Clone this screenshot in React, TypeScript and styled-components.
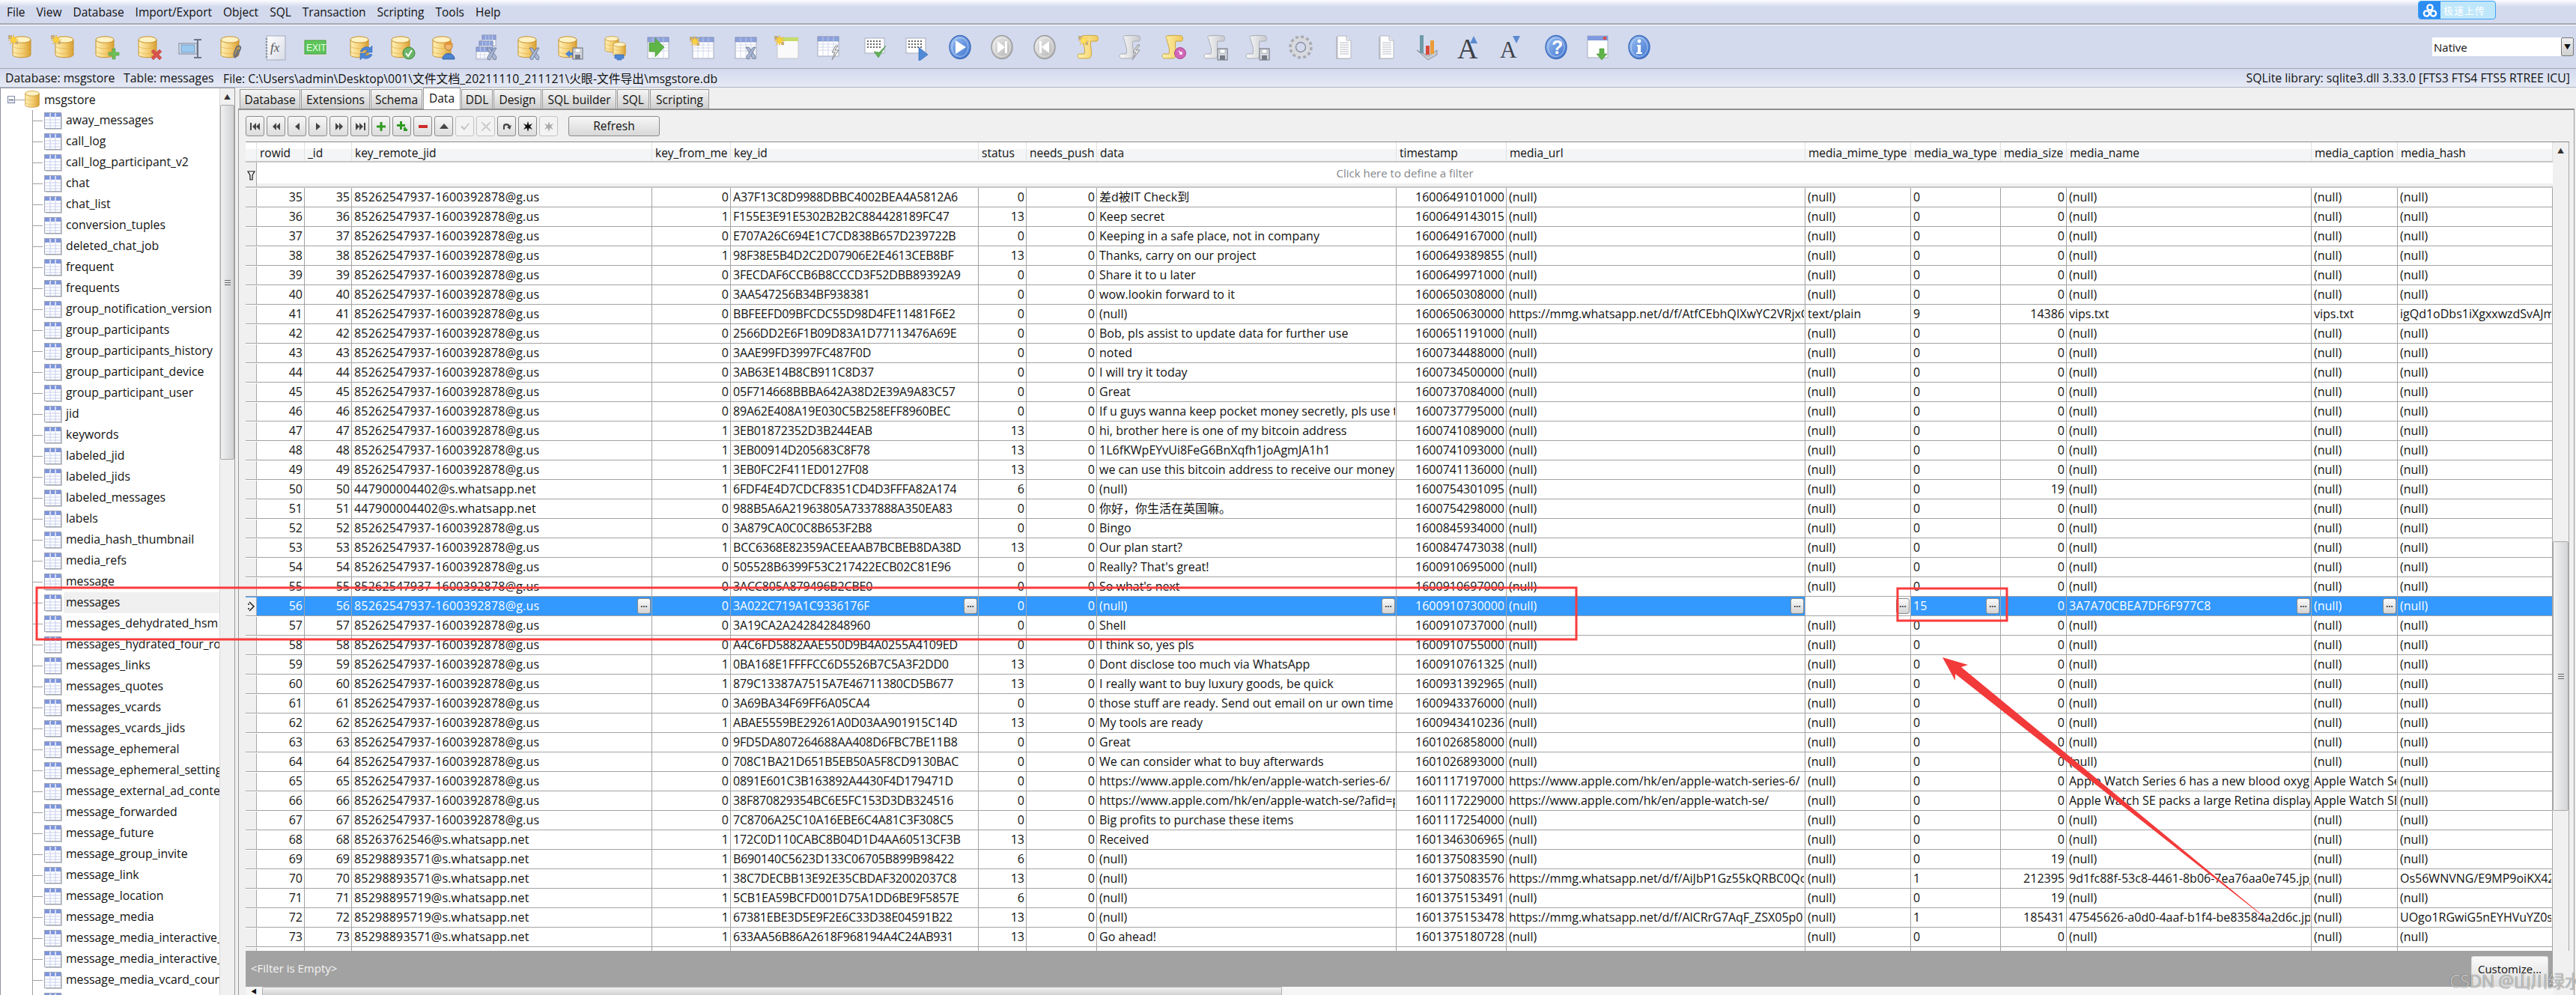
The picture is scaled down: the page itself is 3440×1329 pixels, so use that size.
import React from "react";
import styled, { createGlobalStyle } from "styled-components";

const Global = createGlobalStyle`
  html, body { margin: 0; padding: 0; background: #f0f0f0; }
  body { font-family: "Open Sans", "Noto Sans CJK SC", sans-serif; color: #111; overflow: hidden; }
  * { box-sizing: border-box; }
`;

const Page = styled.div`
  position: relative; width: 3440px; height: 1329px; overflow: hidden;
  display: flex; flex-direction: column; background: #f0f0f0;
`;
const MenuBar = styled.div`
  height: 33px; flex: none; display: flex; gap: 15px; padding: 5px 0 0 9px; font-size: 15.5px; line-height: 22px;
  background: linear-gradient(#fdfdfe 0, #d3daee 9px, #d3daee 100%);
  border-bottom: 1px solid #a4a8b0; box-shadow: inset 0 -1px 0 #a4a8b0;
`;
const MenuItem = styled.span``;
const Toolbar = styled.div`
  height: 59px; flex: none; display: flex; align-items: center; position: relative;
  background: #d3daee; border-top: 1px solid #fff; border-bottom: 1px solid #a4a8b0;
`;
const ToolIcon = styled.svg<{ $ml: number }>`
  width: 38px; height: 36px; flex: none; margin-left: ${p => p.$ml}px;
`;
const Native = styled.div`
  position: absolute; left: 3248px; top: 16px; width: 189px; height: 25px; background: #fff;
  display: flex; align-items: center; font-size: 15px; padding-left: 2px;
`;
const NativeBtn = styled.div`
  position: absolute; right: 0; top: 0; width: 17px; height: 25px; background: linear-gradient(#f0f0f0, #cfcfcf);
  border: 1px solid #777; border-radius: 2px; display: flex; align-items: center; justify-content: center; font-size: 9px;
`;
const StatusBar = styled.div`
  height: 25px; flex: none; display: flex; align-items: center; font-size: 15.8px; padding: 0 8px 0 7px;
  background: linear-gradient(#d3daee, #e6eaf5); border-bottom: 1px solid #aeb4c2;
`;
const StatusItem = styled.span<{ $w?: number }>`
  width: ${p => (p.$w ? `${p.$w}px` : "auto")}; white-space: nowrap;
`;
const StatusRight = styled.span`margin-left: auto; white-space: nowrap;`;
const Main = styled.div`flex: 1; min-height: 0; display: flex;`;

const TreePanel = styled.div`
  width: 314px; flex: none; display: flex; background: #fff; border-left: 1px solid #8f939c;
  border-right: 1px solid #9a9a9a; border-top: 1px solid #9a9ea8; overflow: hidden;
`;
const TreeBody = styled.div`flex: 1; min-width: 0; overflow: hidden; padding-top: 1px;`;
const RootRow = styled.div`display: flex; align-items: center; height: 28px; font-size: 15.8px; padding-left: 9px;`;
const Expander = styled.span`
  width: 10px; height: 10px; border: 1px solid #7d8aa6; flex: none; display: flex; align-items: center; justify-content: center;
  background: linear-gradient(#fff, #dde2ee);
  &::before { content: ""; width: 6px; height: 1px; background: #445; }
`;
const RootStub = styled.span`width: 13px; height: 1px; background: #a0a0a0; flex: none;`;
const RootLabel = styled.span`margin-left: 6px;`;
const TreeList = styled.div`margin-left: 42px; border-left: 1px solid #a0a0a0; font-size: 15.8px;`;
const TreeItem = styled.div`height: 28px; display: flex; align-items: center;`;
const TreeStub = styled.span`width: 13px; height: 1px; background: #a0a0a0; flex: none;`;
const TableGlyph = styled.svg`width: 24px; height: 23px; flex: none; margin-left: 2px;`;
const TreeLabel = styled.span<{ $sel?: boolean }>`
  flex: 1; min-width: 0; height: 28px; line-height: 26px; margin-left: 2px; padding-left: 3px; white-space: nowrap; overflow: hidden;
  background: ${p => (p.$sel ? "#f0f0f0" : "transparent")};
`;
const TreeScroll = styled.div`
  width: 20px; flex: none; background: #f0f0f0; border-left: 1px solid #d8d8d8; position: relative; display: flex; flex-direction: column;
`;
const ScrollArrow = styled.div`height: 22px; flex: none; display: flex; align-items: center; justify-content: center; font-size: 9px; color: #333;`;
const TreeThumb = styled.div`
  height: 474px; flex: none; background: linear-gradient(90deg, #f1f1f1, #cfd1d3); border: 1px solid #a8a8a8; border-radius: 2px;
  display: flex; align-items: center; justify-content: center;
`;
const Grip = styled.span`
  width: 8px; height: 7px; border-top: 1px solid #666; border-bottom: 1px solid #666; position: relative;
  &::after { content: ""; position: absolute; left: 0; right: 0; top: 2px; height: 1px; background: #666; }
`;

const Right = styled.div`flex: 1; min-width: 0; display: flex; flex-direction: column; padding-left: 4px; padding-right: 2px;`;
const TabStrip = styled.div`height: 28px; flex: none; display: flex; align-items: flex-end; padding-left: 2px; gap: 1px; font-size: 15.5px;`;
const Tab = styled.div<{ $w: number; $active?: boolean }>`
  width: ${p => p.$w}px; height: ${p => (p.$active ? 29 : 26)}px; text-align: center; white-space: nowrap;
  line-height: ${p => (p.$active ? 26 : 27)}px; border: 1px solid #9a9a9a; border-bottom: none;
  background: ${p => (p.$active ? "#fff" : "linear-gradient(#f2f2f2 10%, #cfcfcf)")};
  margin-bottom: ${p => (p.$active ? -1 : 0)}px; position: relative; z-index: ${p => (p.$active ? 2 : 0)};
`;
const TabPage = styled.div`
  flex: 1; min-height: 0; display: flex; flex-direction: column; background: #f0f0f0;
  border: 1px solid #9a9a9a; border-top: 2px solid #8e8e8e; border-bottom: none; padding: 8px 6px 0 9px;
`;
const NavRow = styled.div`height: 27px; flex: none; display: flex; gap: 3px; align-items: stretch;`;
const NavBtn = styled.div<{ $off?: boolean }>`
  width: 25px; display: flex; align-items: center; justify-content: center; border-radius: 3px;
  border: 1px solid ${p => (p.$off ? "#c4c4c4" : "#8c8c8c")};
  background: ${p => (p.$off ? "#f3f3f3" : "linear-gradient(#f6f6f6, #dcdcdc)")};
`;
const NavSvg = styled.svg`width: 18px; height: 18px;`;
const RefreshBtn = styled.div`
  width: 122px; margin-left: 11px; border: 1px solid #8c8c8c; border-radius: 3px; text-align: center; line-height: 25px; font-size: 15.5px;
  background: linear-gradient(#f6f6f6, #d8d8d8);
`;
const GridFrame = styled.div`
  flex: 1; min-height: 0; margin-top: 7px; display: flex; flex-direction: column; border-top: 1px solid #8b8b8b; border-left: 1px solid #a8a8a8;
`;
const GridMain = styled.div`flex: 1; min-height: 0; display: flex;`;
const Table = styled.div`width: 3081px; flex: none; display: flex; flex-direction: column; margin-left: -1px; background: #fff;`;
const COLS = "15px 64px 63px 401px 105px 331px 64px 94px 400px 147px 399px 141px 120px 88px 327px 115px 207px";
const HeaderRow = styled.div`
  height: 27px; flex: none; display: grid; grid-template-columns: ${COLS};
  font-size: 15.5px; border-bottom: 2px solid #c6c6c6;
  background: linear-gradient(#fff 35%, #f4f5f7 35%);
`;
const HeaderCell = styled.div`
  padding: 3px 0 0 4px; line-height: 22px; border-right: 1px solid #e2e2e2; white-space: nowrap; overflow: hidden;
`;
const FilterRow = styled.div`
  height: 34px; flex: none; display: flex; border-bottom: 2px solid #c6c6c6;
  background: linear-gradient(#fff 86%, #f0f0f0 86%);
`;
const FilterMark = styled.div`
  width: 15px; flex: none; background: #f0f0f0; border-right: 1px solid #a8a8a8; display: flex; align-items: center; justify-content: center;
  padding-top: 4px;
`;
const FilterHint = styled.div`flex: 1; text-align: center; line-height: 28px; font-size: 15px; color: #83878c;`;
const Rows = styled.div`flex: 1; min-height: 0; overflow: hidden;`;
const Row = styled.div<{ $sel?: boolean }>`
  height: 26px; display: grid; grid-template-columns: ${COLS}; font-size: 16px; line-height: 25px;
  border-bottom: 1px solid #a3a3a3; color: ${p => (p.$sel ? "#fff" : "#111")}; background: ${p => (p.$sel ? "#3399ff" : "#fff")};
`;
const Indicator = styled.div`
  background: #f0f0f0; border-right: 1px solid #a8a8a8; display: flex; align-items: center; justify-content: center; margin-top: 1px;
`;
const Cell = styled.div<{ $num?: boolean; $white?: boolean; $ls?: number }>`
  display: flex; min-width: 0; border-right: 1px solid #a3a3a3; padding: ${p => (p.$num ? "0 2px 0 0" : "0 1px 0 3px")}; align-items: center;
  justify-content: ${p => (p.$num ? "flex-end" : "flex-start")}; overflow: hidden; white-space: nowrap;
  background: ${p => (p.$white ? "#fff" : "transparent")}; letter-spacing: ${p => p.$ls ?? 0}px;
`;
const CellText = styled.span`flex: 0 1 auto; min-width: 0; overflow: hidden;`;
const MoreBtn = styled.span`
  width: 18px; height: 21px; flex: none; margin-left: auto; border: 1px solid #8a8a8a; border-radius: 3px; color: #111;
  background: linear-gradient(#fbfbfb, #d4d4d4); text-align: center; font-size: 11px; line-height: 13px; font-weight: 700; letter-spacing: 0;
`;
const FilterBar = styled.div`
  height: 48px; flex: none; background: #a2a2a2; color: #f4f4f4; font-size: 15px; display: flex; align-items: center;
  justify-content: space-between; padding: 0 6px 0 7px;
`;
const FilterText = styled.span`margin-top: -2px;`;
const Customize = styled.div`
  width: 103px; height: 41px; margin-top: 7px; color: #111; text-align: center; line-height: 32px; font-size: 15px;
  border: 1px solid #d8d8d8; border-bottom: none; border-radius: 3px 3px 0 0; background: linear-gradient(#fafafa, #dcdcdc);
`;
const VScroll = styled.div`width: 22px; flex: none; height: 1080px; background: #f0f0f0; display: flex; flex-direction: column; border-right: 1px solid #a8a8a8;`;
const VSpacer = styled.div`height: 511px; flex: none;`;
const VThumb = styled.div`
  height: 360px; flex: none; background: linear-gradient(90deg, #f2f2f2, #d3d5d7); border: 1px solid #a8a8a8; border-radius: 2px;
  display: flex; align-items: center; justify-content: center;
`;
const HScroll = styled.div`height: 11px; flex: none; width: 3081px; margin-left: -1px; background: #f6f6f6; display: flex; align-items: center;`;
const HArrow = styled.div`width: 22px; flex: none; font-size: 8px; text-align: center; line-height: 11px;`;
const HThumb = styled.div`
  width: 1362px; height: 11px; flex: none; background: linear-gradient(#f0f0f0, #d2d2d2); border: 1px solid #b0b0b0; border-bottom: none; border-radius: 2px 2px 0 0;
`;
const Cloud = styled.div`
  position: absolute; left: 3229px; top: 1px; width: 104px; height: 25px; display: flex; border: 1px solid #3ea0f5; border-radius: 4px;
  overflow: hidden; background: #bfe7fb; color: #fff; font-size: 14px; line-height: 23px;
`;
const CloudLogo = styled.div`width: 29px; flex: none; background: #2b8df2; display: flex; align-items: center; justify-content: center;`;
const CloudText = styled.span`padding-left: 4px; font-family: "Noto Sans CJK SC", sans-serif; letter-spacing: 1px; font-size: 13px;`;
const Annotation = styled.svg`position: absolute; left: 0; top: 0; pointer-events: none;`;
const Watermark = styled.div`
  position: absolute; left: 3271px; top: 1296px; font-size: 23px; line-height: 28px; white-space: nowrap; color: rgba(235, 235, 235, 0.75);
  letter-spacing: -0.3px; text-shadow: 0 0 1px rgba(40, 40, 40, 0.9);
`;
const DefsSvg = styled.svg`position: absolute; width: 0; height: 0;`;

/* ---------- icon pieces ---------- */
const Defs = () => (
  <DefsSvg>
    <defs>
      <linearGradient id="gold" x1="0" x2="1" y1="0" y2="0">
        <stop offset="0" stopColor="#fff0b8" /><stop offset=".55" stopColor="#f3cd72" /><stop offset="1" stopColor="#d99e32" />
      </linearGradient>
      <linearGradient id="paper" x1="0" x2="1" y1="0" y2="1">
        <stop offset="0" stopColor="#ffffff" /><stop offset="1" stopColor="#d8dce6" />
      </linearGradient>
      <linearGradient id="blue" x1="0" x2="1" y1="0" y2="1">
        <stop offset="0" stopColor="#9cc0f2" /><stop offset="1" stopColor="#3d73cf" />
      </linearGradient>
      <linearGradient id="grey" x1="0" x2="1" y1="0" y2="1">
        <stop offset="0" stopColor="#ededed" /><stop offset="1" stopColor="#b2b2b2" />
      </linearGradient>
      <linearGradient id="scroll" x1="0" x2="1" y1="0" y2="0">
        <stop offset="0" stopColor="#fff3b0" /><stop offset="1" stopColor="#f0c95c" />
      </linearGradient>
      <linearGradient id="gscroll" x1="0" x2="1" y1="0" y2="0">
        <stop offset="0" stopColor="#fbfbfb" /><stop offset="1" stopColor="#c6c8cc" />
      </linearGradient>
    </defs>
  </DefsSvg>
);

const Db = ({ x = 7, y = 3, s = 1 }: { x?: number; y?: number; s?: number }) => (
  <g transform={`translate(${x} ${y}) scale(${s})`}>
    <path d="M0 5v20c0 5 24 5 24 0V5z" fill="url(#gold)" stroke="#c4912a" />
    <path d="M0 13c0 5 24 5 24 0M0 20c0 5 24 5 24 0" fill="none" stroke="#e2b552" strokeWidth=".8" />
    <ellipse cx="12" cy="5" rx="12" ry="4.2" fill="#fff2c4" stroke="#c4912a" />
  </g>
);
const Star = ({ x = 0, y = 0, c = "#fbd23c" }: { x?: number; y?: number; c?: string }) => (
  <g transform={`translate(${x} ${y})`}>
    <rect x="0" y="1" width="5" height="5" fill="#b9a98c" /><rect x="9" y="9" width="4" height="4" fill="#b9a98c" />
    <path d="M7 0l1.2 4.6L13 2.5 9.6 6.4 14 7.5 9.6 8.6 12 13 8 9.8 7 14 6 9.8 2 13l2.4-4.4L0 7.5l4.4-1.1L1 2.5l4.8 2.1z" fill={c} stroke="#e8a32c" strokeWidth=".4" />
  </g>
);
const Plus = ({ x = 22, y = 20 }: { x?: number; y?: number }) => (
  <path transform={`translate(${x} ${y})`} d="M5 0h4v5h5v4H9v5H5V9H0V5h5z" fill="#6fbf56" stroke="#4d9a3c" strokeWidth=".6" />
);
const Cross = ({ x = 23, y = 21 }: { x?: number; y?: number }) => (
  <path transform={`translate(${x} ${y})`} d="M2 0l4 4 4-4 3 3-4 4 4 4-3 3-4-4-4 4-3-3 4-4-4-4z" fill="#d9504c" stroke="#b33c38" strokeWidth=".5" />
);
const Wrench = ({ x = 20, y = 17 }: { x?: number; y?: number }) => (
  <g transform={`translate(${x} ${y})`} fill="#a9b8d6" stroke="#66708c" strokeWidth=".8">
    <path d="M1 1l4 0 9 12-1 4-3-1z" /><path d="M14 1l-3 0-9 12 0 3 3 1z" />
  </g>
);
const Floppy = ({ x = 20, y = 18 }: { x?: number; y?: number }) => (
  <g transform={`translate(${x} ${y})`}>
    <rect width="13" height="15" fill="#d7d9de" stroke="#666c78" />
    <rect x="3" y="1" width="7" height="5" fill="#fff" stroke="#8a8f99" strokeWidth=".6" />
    <rect x="3" y="9" width="7" height="6" fill="#767b86" />
  </g>
);
const Sheet = ({ x = 6, y = 5, w = 24, h = 24 }: { x?: number; y?: number; w?: number; h?: number }) => (
  <g transform={`translate(${x} ${y})`}>
    <rect width={w} height={h} fill="#fff" stroke="#a5abbc" />
    <rect width={w} height="6" fill="#8ea3dc" stroke="#7486b8" strokeWidth=".6" />
    {[1, 2, 3].map(i => <path key={i} d={`M${(i * w) / 4} 0V${h}`} stroke="#c8cfe8" strokeWidth=".8" />)}
    {[10, 14, 18].map(i => <path key={i} d={`M0 ${i}H${w}`} stroke="#c8cfe8" strokeWidth=".8" />)}
  </g>
);
const Scroll = ({ fill = "url(#scroll)", stroke = "#c9a43a" }: { fill?: string; stroke?: string }) => (
  <g>
    <path d="M10 3c6-1 15-1 20 0 2 1 2 6 0 7l-8 0c-2 6 2 14 0 20-1 3-4 3-7 3H7c-3 0-4-5-1-6l7 0c2-7-2-14-3-20-1-2-2-3 0-4z" fill={fill} stroke={stroke} />
  </g>
);
const Circle = ({ fill }: { fill: string }) => (
  <>
    <ellipse cx="19" cy="18" rx="14" ry="15.5" fill={fill} stroke={fill === "url(#blue)" ? "#3e6bb8" : "#9a9a9a"} strokeWidth="1.4" />
    <ellipse cx="19" cy="18" rx="11" ry="12.5" fill="none" stroke="#fff" strokeOpacity=".5" />
  </>
);
const Doc = () => (
  <g>
    <path d="M11 3h12l6 6v24H11z" fill="#b9bcc4" transform="translate(-2 1)" />
    <path d="M11 3h12l6 6v24H11z" fill="#fff" stroke="#b5b8c0" />
    <path d="M23 3v6h6" fill="#e6e8ee" stroke="#b5b8c0" />
    {[12, 15, 18, 21, 24, 27].map(y => <path key={y} d={`M14 ${y}h12`} stroke="#b8bcc6" />)}
  </g>
);
const Keys = () => (
  <g>
    <rect x="7" y="6" width="26" height="20" fill="#fff" stroke="#a5abbc" />
    {[9, 13, 17].map(y => [10, 14, 18, 22, 26].map(x => <rect key={`${x}${y}`} x={x} y={y} width="2" height="2" fill="#666" />))}
  </g>
);
const T = styled.text``;

function glyph(k: string) {
  switch (k) {
    case "dbStar": return <><Db /><Star x={1} y={1} /></>;
    case "dbPlus": return <><Db x={5} /><Plus /></>;
    case "dbX": return <><Db x={5} /><Cross /></>;
    case "input": return <><rect x="4" y="13" width="24" height="14" fill="#dfe3ee" stroke="#7a8296" /><rect x="7" y="15" width="18" height="10" fill="#9bc9ee" stroke="#6e9cc4" /><path d="M24 8h10M29 8v24M24 32h10" stroke="#6d7484" strokeWidth="2" fill="none" /></>;
    case "dbClip": return <><Db x={4} /><path d="M24 32c-3-1-3-4-2-7l3-7c2-3 6-1 5 2l-4 9c-1 2-3 1-2-1l3-7" fill="none" stroke="#6b6f77" strokeWidth="2" /></>;
    case "fx": return <><rect x="9" y="3" width="25" height="32" fill="url(#paper)" stroke="#a5abbc" /><path d="M9 6v26" stroke="#8b92a2" strokeWidth="2.4" strokeDasharray="2 2" /><T x="14" y="24" fontFamily="Liberation Serif" fontStyle="italic" fontSize="17" fill="#555">fx</T></>;
    case "exit": return <><rect x="3" y="8" width="31" height="22" fill="#dcdde2" /><rect x="5" y="9" width="28" height="18" fill="#5ec55a" stroke="#3e9c3c" /><T x="7" y="23" fontFamily="Liberation Sans" fontSize="12" fill="#eaffea">EXIT</T></>;
    case "dbRefresh": return <><Db x={4} /><path d="M17 24c2-6 9-8 13-5l3-3v9h-9l3-3c-3-1-6 0-7 2zM33 28c-2 5-9 7-13 4l-3 3v-9h9l-3 3c3 1 6 0 7-2z" fill="#4b86d8" stroke="#2e5ea8" strokeWidth=".5" /></>;
    case "dbCheck": return <><Db x={4} /><circle cx="27" cy="26" r="8" fill="#6db56a" stroke="#3f8a3c" /><path d="M23 26l3 4 5-8" stroke="#fff" strokeWidth="2" fill="none" /></>;
    case "dbUser": return <><Db x={3} /><circle cx="24" cy="17" r="5" fill="#f1b56d" stroke="#b47a38" /><path d="M18 15c1-6 11-6 12 0z" fill="#e2943a" /><path d="M16 34c0-10 16-10 16 0z" fill="#4d84cf" stroke="#2e5ea8" /></>;
    case "tablesWrench": return <><Sheet x={13} y={2} w={18} h={14} /><Sheet x={9} y={10} w={18} h={14} /><Sheet x={5} y={18} w={22} h={16} /><Wrench x={18} y={18} /></>;
    case "dbWrench": return <><Db x={4} /><Wrench x={18} y={18} /></>;
    case "dbSave": return <><Db x={3} /><path d="M18 22l-6 5 6 5v-3h5v-4h-5z" fill="#4b86d8" /><Floppy x={22} y={19} /></>;
    case "dbPlug": return <><Db x={5} y={3} s={.75} /><Db x={16} y={11} s={.68} /><path d="M18 28h12v5h-3v2h-6v-2h-3z" fill="#4b86d8" stroke="#2e5ea8" strokeWidth=".6" /></>;
    case "tableArrow": return <><Sheet x={6} y={5} w={28} h={28} /><path d="M8 12h8V6l12 12-12 13v-7H8z" fill="#5fb548" stroke="#3f8a2e" strokeWidth=".6" /></>;
    case "tableStar": return <><Sheet x={7} y={5} w={28} h={28} /><Star x={3} y={3} /></>;
    case "tableWrench": return <><Sheet x={7} y={5} w={28} h={28} /><Wrench x={20} y={17} /></>;
    case "pageStar": return <><rect x="7" y="5" width="28" height="28" fill="#fafafa" stroke="#c6c8cc" /><rect x="7" y="5" width="28" height="5" fill="#c5dc6e" /><Star x={3} y={2} /></>;
    case "tableBolt": return <><Sheet x={3} y={4} w={28} h={26} /><path d="M27 16l-5 9h4l-4 10 9-13h-5l4-6z" fill="#e8e8e8" stroke="#8d8d8d" /></>;
    case "keysCheck": return <><Keys /><path d="M19 24l6 8 10-16-9 9z" fill="#63b35a" stroke="#3f8a3c" strokeWidth=".6" /></>;
    case "keysPlay": return <><Keys /><path d="M24 18l12 10-12 9z" fill="#4f8ad8" stroke="#2e5ea8" strokeWidth=".6" /></>;
    case "play": return <><Circle fill="url(#blue)" /><path d="M13 9l14 9-14 9z" fill="#fff" /></>;
    case "next": return <><Circle fill="url(#grey)" /><path d="M13 10l10 8-10 8z" fill="#fff" /><rect x="23" y="10" width="3" height="16" fill="#fff" /></>;
    case "prev": return <><Circle fill="url(#grey)" /><path d="M25 10l-10 8 10 8z" fill="#fff" /><rect x="12" y="10" width="3" height="16" fill="#fff" /></>;
    case "scrollStar": return <><Scroll /><Star x={5} y={2} c="#ffe35a" /></>;
    case "scrollBolt": return <><Scroll fill="url(#gscroll)" stroke="#a8abb2" /><path d="M28 15l-6 10h4l-5 10 10-13h-5l5-7z" fill="#e9e9e9" stroke="#8d8d8d" /></>;
    case "scrollPink": return <><Scroll /><circle cx="28" cy="26" r="7.5" fill="#d167b8" stroke="#a8488f" /><path d="M26 23l4 4v-3M30 27h-3" stroke="#fff" strokeWidth="1.4" fill="none" /></>;
    case "scrollSave": return <><Scroll fill="url(#gscroll)" stroke="#a8abb2" /><Floppy x={22} y={20} /></>;
    case "gear": return <><circle cx="19" cy="18" r="11" fill="none" stroke="#d8d9dc" strokeWidth="5" /><circle cx="19" cy="18" r="14" fill="none" stroke="#a9abb0" strokeWidth="3.5" strokeDasharray="4 3.3" /><circle cx="19" cy="18" r="6.5" fill="#d3daee" stroke="#8d9096" strokeWidth="1.4" /></>;
    case "doc": return <Doc />;
    case "chart": return <><path d="M5 22l15 13 12-7 0-6-12 8z" fill="#c9ccd2" stroke="#8d9096" /><rect x="9" y="2" width="5" height="24" fill="#6f9aa8" /><rect x="17" y="16" width="5" height="12" fill="#d84b3a" /><rect x="23" y="9" width="5" height="18" fill="#eb9c38" /></>;
    case "aUp": return <><T x="5" y="33" fontFamily="Liberation Serif" fontSize="38" fill="#3d4048">A</T><path d="M27 3l5 10H22z" fill="#5b8ad0" /></>;
    case "aDown": return <><T x="6" y="32" fontFamily="Liberation Serif" fontSize="31" fill="#3d4048">A</T><path d="M23 3h10l-5 10z" fill="#5b8ad0" /></>;
    case "help": return <><Circle fill="url(#blue)" /><T x="13" y="27" fontFamily="Liberation Sans" fontWeight="700" fontSize="25" fill="#fff">?</T></>;
    case "winDown": return <><rect x="6" y="3" width="27" height="29" fill="#fff" stroke="#a5abbc" /><rect x="6" y="3" width="27" height="6" fill="#7f9adf" /><rect x="27" y="4" width="4" height="4" fill="#d9504c" /><path d="M22 20h6v7h4l-7 8-7-8h4z" fill="#5fb548" stroke="#3f8a2e" strokeWidth=".6" /></>;
    case "info": return <><Circle fill="url(#blue)" /><circle cx="19" cy="10" r="2.4" fill="#fff" /><path d="M16 15h5v10h2v2h-8v-2h2v-8h-1z" fill="#fff" /></>;
    default: return null;
  }
}

const TOOLS: [string, number][] = [
  ["dbStar", 10], ["dbStar", 19], ["dbPlus", 18], ["dbX", 19], ["input", 17], ["dbClip", 18], ["fx", 18], ["exit", 17],
  ["dbRefresh", 24], ["dbCheck", 17], ["dbUser", 18], ["tablesWrench", 18], ["dbWrench", 19], ["dbSave", 17], ["dbPlug", 22],
  ["tableArrow", 18], ["tableStar", 21], ["tableWrench", 19], ["pageStar", 18], ["tableBolt", 20], ["keysCheck", 21], ["keysPlay", 17],
  ["play", 22], ["next", 18], ["prev", 19], ["scrollStar", 21], ["scrollBolt", 18], ["scrollPink", 19], ["scrollSave", 18], ["scrollSave", 18],
  ["gear", 20], ["doc", 19], ["doc", 19], ["chart", 17], ["aUp", 16], ["aDown", 18], ["help", 24], ["winDown", 17], ["info", 18],
];

const NAV: { d: React.ReactNode; off?: boolean }[] = [
  { d: <path d="M2 4h2v10H2zM5 9l5-5v10zM10 9l5-5v10z" fill="#444" /> },
  { d: <path d="M4 9l5-5v10zM9 9l5-5v10z" fill="#444" /> },
  { d: <path d="M6 9l6-5v10z" fill="#444" /> },
  { d: <path d="M12 9L6 4v10z" fill="#444" /> },
  { d: <path d="M14 9L9 4v10zM9 9L4 4v10z" fill="#444" /> },
  { d: <path d="M16 4h-2v10h2zM13 9L8 4v10zM8 9L3 4v10z" fill="#444" /> },
  { d: <path d="M7.500 3h3v4.500H15v3h-4.500V15h-3v-4.500H3v-3h4.500z" fill="#2f9a20" /> },
  { d: <><path d="M6 2h3v4h4v3H9v4H6V9H2V6h4z" fill="#2f9a20" /><path d="M11 10h3v2h2v3h-5z" fill="#2f9a20" /></> },
  { d: <rect x="3" y="7" width="12" height="4" fill="#cf2b2b" /> },
  { d: <path d="M9 5l6 7H3z" fill="#444" /> },
  { d: <path d="M3 9l2-1 3 3 6-7 1 1-7 9z" fill="#c2c2c2" />, off: true },
  { d: <path d="M3 3l6 5 6-5-5 6 5 6-6-5-6 5 5-6z" fill="none" stroke="#b8b8b8" />, off: true },
  { d: <path d="M4 13V8c0-4 8-4 9 0l2-1-2 6-4-3 2-1c-1-2-5-2-5 0v4z" fill="#444" /> },
  { d: <path d="M9 2l1.500 5 4.500-2-3 4 3 4-4.500-2L9 16l-1.500-5L3 13l3-4-3-4 4.500 2z" fill="#111" /> },
  { d: <path d="M9 2l1.500 5 4.500-2-3 4 3 4-4.500-2L9 16l-1.500-5L3 13l3-4-3-4 4.500 2z" fill="#aaa" />, off: true },
];

const TABS: [string, number][] = [
  ["Database", 81], ["Extensions", 92], ["Schema", 69], ["Data", 50], ["DDL", 42], ["Design", 64], ["SQL builder", 99], ["SQL", 43], ["Scripting", 79],
];
const MENU = ["File", "View", "Database", "Import/Export", "Object", "SQL", "Transaction", "Scripting", "Tools", "Help"];

const TREE = ["away_messages","call_log","call_log_participant_v2","chat","chat_list","conversion_tuples","deleted_chat_job","frequent","frequents","group_notification_version","group_participants","group_participants_history","group_participant_device","group_participant_user","jid","keywords","labeled_jid","labeled_jids","labeled_messages","labels","media_hash_thumbnail","media_refs","message","messages","messages_dehydrated_hsm","messages_hydrated_four_row_template_info","messages_links","messages_quotes","messages_vcards","messages_vcards_jids","message_ephemeral","message_ephemeral_setting","message_external_ad_content","message_forwarded","message_future","message_group_invite","message_link","message_location","message_media","message_media_interactive_annotation","message_media_interactive_annotation_vertex","message_media_vcard_count","message_mentions"];

const HEAD = ["", "rowid", "_id", "key_remote_jid", "key_from_me", "key_id", "status", "needs_push", "data", "timestamp", "media_url", "media_mime_type", "media_wa_type", "media_size", "media_name", "media_caption", "media_hash"];

const G = "85262547937-1600392878@g.us";
const J1 = "85298893571@s.whatsapp.net";
const J2 = "85298895719@s.whatsapp.net";
const J3 = "447900004402@s.whatsapp.net";
const N = "(null)";

type R = { id: number; jid: string; me: number; key: string; st: number; data: string; ts: string; url?: string; mime?: string; wa?: string; size?: string; name?: string; cap?: string; hash?: string };
const mk = (id: number, jid: string, me: number, key: string, st: number, data: string, ts: string, extra: Partial<R> = {}): R => ({ id, jid, me, key, st, data, ts, ...extra });

const DATA: R[] = [
  mk(35,G,0,"A37F13C8D9988DBBC4002BEA4A5812A6",0,"差d被IT Check到","1600649101000"),
  mk(36,G,1,"F155E3E91E5302B2B2C884428189FC47",13,"Keep secret","1600649143015"),
  mk(37,G,0,"E707A26C694E1C7CD838B657D239722B",0,"Keeping in a safe place, not in company","1600649167000"),
  mk(38,G,1,"98F38E5B4D2C2D07906E2E4613CEB8BF",13,"Thanks, carry on our project","1600649389855"),
  mk(39,G,0,"3FECDAF6CCB6B8CCCD3F52DBB89392A9",0,"Share it to u later","1600649971000"),
  mk(40,G,0,"3AA547256B34BF938381",0,"wow.lookin forward to it","1600650308000"),
  mk(41,G,0,"BBFEEFD09BFCDC55D98D4FE11481F6E2",0,N,"1600650630000",{url:"https://mmg.whatsapp.net/d/f/AtfCEbhQIXwYC2VRjxC8zKp",mime:"text/plain",wa:"9",size:"14386",name:"vips.txt",cap:"vips.txt",hash:"igQd1oDbs1iXgxxwzdSvAJm8sLk2Qa"}),
  mk(42,G,0,"2566DD2E6F1B09D83A1D77113476A69E",0,"Bob, pls assist to update data for further use","1600651191000"),
  mk(43,G,0,"3AAE99FD3997FC487F0D",0,"noted","1600734488000"),
  mk(44,G,0,"3AB63E14B8CB911C8D37",0,"I will try it today","1600734500000"),
  mk(45,G,0,"05F714668BBBA642A38D2E39A9A83C57",0,"Great","1600737084000"),
  mk(46,G,0,"89A62E408A19E030C5B258EFF8960BEC",0,"If u guys wanna keep pocket money secretly, pls use this one","1600737795000"),
  mk(47,G,1,"3EB01872352D3B244EAB",13,"hi, brother  here is one of my bitcoin address","1600741089000"),
  mk(48,G,1,"3EB00914D205683C8F78",13,"1L6fKWpEYvUi8FeG6BnXqfh1joAgmJA1h1","1600741093000"),
  mk(49,G,1,"3EB0FC2F411ED0127F08",13,"we can use this bitcoin address to receive our money","1600741136000"),
  mk(50,J3,1,"6FDF4E4D7CDCF8351CD4D3FFFA82A174",6,N,"1600754301095",{size:"19"}),
  mk(51,J3,0,"988B5A6A21963805A7337888A350EA83",0,"你好，你生活在英国嘛。","1600754298000"),
  mk(52,G,0,"3A879CA0C0C8B653F2B8",0,"Bingo","1600845934000"),
  mk(53,G,1,"BCC6368E82359ACEEAAB7BCBEB8DA38D",13,"Our plan start?","1600847473038"),
  mk(54,G,0,"505528B6399F53C217422ECB02C81E96",0,"Really? That's great!","1600910695000"),
  mk(55,G,0,"3ACC805A879496B2CBE0",0,"So what's next","1600910697000"),
  mk(56,G,0,"3A022C719A1C9336176F",0,N,"1600910730000",{mime:"",wa:"15",name:"3A7A70CBEA7DF6F977C8"}),
  mk(57,G,0,"3A19CA2A242842848960",0,"Shell","1600910737000"),
  mk(58,G,0,"A4C6FD5882AAE550D9B4A0255A4109ED",0,"I think so, yes pls","1600910755000"),
  mk(59,G,1,"0BA168E1FFFFCC6D5526B7C5A3F2DD0",13,"Dont disclose too much via WhatsApp","1600910761325"),
  mk(60,G,1,"879C13387A7515A7E46711380CD5B677",13,"I really want to buy luxury goods, be quick","1600931392965"),
  mk(61,G,0,"3A69BA34F69FF6A05CA4",0,"those stuff are ready. Send out email on ur own time","1600943376000"),
  mk(62,G,1,"ABAE5559BE29261A0D03AA901915C14D",13,"My tools are ready","1600943410236"),
  mk(63,G,0,"9FD5DA807264688AA408D6FBC7BE11B8",0,"Great","1601026858000"),
  mk(64,G,0,"708C1BA21D651B5EB50A5F8CD9130BAC",0,"We can consider what to buy afterwards","1601026893000"),
  mk(65,G,0,"0891E601C3B163892A4430F4D179471D",0,"https://www.apple.com/hk/en/apple-watch-series-6/","1601117197000",{url:"https://www.apple.com/hk/en/apple-watch-series-6/",name:"Apple Watch Series 6 has a new blood oxygen sensor",cap:"Apple Watch Series 6"}),
  mk(66,G,0,"38F870829354BC6E5FC153D3DB324516",0,"https://www.apple.com/hk/en/apple-watch-se/?afid=p238","1601117229000",{url:"https://www.apple.com/hk/en/apple-watch-se/",name:"Apple Watch SE packs a large Retina display, an",cap:"Apple Watch SE"}),
  mk(67,G,0,"7C8706A25C10A16EBE6C4A81C3F308C5",0,"Big profits to purchase these items","1601117254000"),
  mk(68,"85263762546@s.whatsapp.net",1,"172C0D110CABC8B04D1D4AA60513CF3B",13,"Received","1601346306965"),
  mk(69,J1,1,"B690140C5623D133C06705B899B98422",6,N,"1601375083590",{size:"19"}),
  mk(70,J1,1,"38C7DECBB13E92E35CBDAF32002037C8",13,N,"1601375083576",{url:"https://mmg.whatsapp.net/d/f/AiJbP1Gz55kQRBC0Qc8zKp",wa:"1",size:"212395",name:"9d1fc88f-53c8-4461-8b06-7ea76aa0e745.jpg",hash:"Os56WNVNG/E9MP9oiKX42kLp0QaZ"}),
  mk(71,J2,1,"5CB1EA59BCFD001D75A1DD6BE9F5857E",6,N,"1601375153491",{size:"19"}),
  mk(72,J2,1,"67381EBE3D5E9F2E6C33D38E04591B22",13,N,"1601375153478",{url:"https://mmg.whatsapp.net/d/f/AlCRrG7AqF_ZSX05p01xRt",wa:"1",size:"185431",name:"47545626-a0d0-4aaf-b1f4-be83584a2d6c.jpg",hash:"UOgo1RGwiG5nEYHVuYZ0s5Kd2Pm"}),
  mk(73,J1,1,"633AA56B86A2618F968194A4C24AB931",13,"Go ahead!","1601375180728"),
  mk(74,J1,1,"",0,"","",{url:" ",mime:" ",wa:" ",size:" ",name:" ",cap:" ",hash:" "}),
];

const More = () => <MoreBtn>…</MoreBtn>;
const FilterGlyph = () => (
  <svg width="11" height="14" viewBox="0 0 11 14"><path d="M1 1h9L7 6v6H4V6z" fill="#fff" stroke="#111" strokeWidth="1.2" /></svg>
);
const RowMark = () => (
  <svg width="11" height="14" viewBox="0 0 11 14"><path d="M3 1l6 6-6 6M1 4h2M1 10h2" fill="none" stroke="#111" strokeWidth="1.4" /></svg>
);

const DataRow = ({ r }: { r: R }) => {
  const sel = r.id === 56;
  return (
    <Row $sel={sel}>
      <Indicator>{sel && <RowMark />}</Indicator>
      <Cell $num>{r.id}</Cell>
      <Cell $num>{r.id}</Cell>
      <Cell $ls={0.2}><CellText>{r.jid}</CellText>{sel && <More />}</Cell>
      <Cell $num>{r.me}</Cell>
      <Cell $ls={-0.18}><CellText>{r.key}</CellText>{sel && <More />}</Cell>
      <Cell $num>{r.st}</Cell>
      <Cell $num>0</Cell>
      <Cell><CellText>{r.data}</CellText>{sel && <More />}</Cell>
      <Cell $num>{r.ts}</Cell>
      <Cell><CellText>{r.url ?? N}</CellText>{sel && <More />}</Cell>
      <Cell $white={sel}><CellText>{r.mime ?? N}</CellText>{sel && <More />}</Cell>
      <Cell><CellText>{r.wa ?? "0"}</CellText>{sel && <More />}</Cell>
      <Cell $num>{r.size ?? "0"}</Cell>
      <Cell><CellText>{r.name ?? N}</CellText>{sel && <More />}</Cell>
      <Cell><CellText>{r.cap ?? N}</CellText>{sel && <More />}</Cell>
      <Cell><CellText>{r.hash ?? N}</CellText></Cell>
    </Row>
  );
};

export default function App() {
  return (
    <Page>
      <Global />
      <Defs />
      <MenuBar>{MENU.map(m => <MenuItem key={m}>{m}</MenuItem>)}</MenuBar>
      <Toolbar>
        {TOOLS.map(([k, ml], i) => (
          <ToolIcon key={i} $ml={ml} viewBox="0 0 38 36">{glyph(k)}</ToolIcon>
        ))}
        <Native>Native<NativeBtn>▼</NativeBtn></Native>
      </Toolbar>
      <StatusBar>
        <StatusItem $w={158}>Database: msgstore</StatusItem>
        <StatusItem $w={133}>Table: messages</StatusItem>
        <StatusItem>File: C:\Users\admin\Desktop\001\文件文档_20211110_211121\火眼-文件导出\msgstore.db</StatusItem>
        <StatusRight>SQLite library: sqlite3.dll 3.33.0 [FTS3 FTS4 FTS5 RTREE ICU]</StatusRight>
      </StatusBar>
      <Main>
        <TreePanel>
          <TreeBody>
            <RootRow>
              <Expander /><RootStub />
              <svg width="20" height="24" viewBox="0 0 24 31"><Db x={0} y={0} /></svg>
              <RootLabel>msgstore</RootLabel>
            </RootRow>
            <TreeList>
              {TREE.map(t => (
                <TreeItem key={t}>
                  <TreeStub />
                  <TableGlyph viewBox="0 0 24 23">
                    <rect x=".5" y=".5" width="22" height="21" fill="#fff" stroke="#9ea5b8" />
                    <rect x="23" y="2" width="1" height="21" fill="#c8c8c8" /><rect x="2" y="22" width="22" height="1" fill="#c8c8c8" />
                    <rect x="1" y="1" width="21" height="5" fill="#7f96dc" />
                    <path d="M8 1v20M15 1v20M1 10h21M1 14h21M1 18h21" stroke="#c6cdee" fill="none" />
                    <path d="M8 1v5M15 1v5" stroke="#fff" fill="none" />
                  </TableGlyph>
                  <TreeLabel $sel={t === "messages"}>{t}</TreeLabel>
                </TreeItem>
              ))}
            </TreeList>
          </TreeBody>
          <TreeScroll>
            <ScrollArrow>▲</ScrollArrow>
            <TreeThumb><Grip /></TreeThumb>
          </TreeScroll>
        </TreePanel>
        <Right>
          <TabStrip>
            {TABS.map(([t, w]) => <Tab key={t} $w={w} $active={t === "Data"}>{t}</Tab>)}
          </TabStrip>
          <TabPage>
            <NavRow>
              {NAV.map((n, i) => (
                <NavBtn key={i} $off={n.off}><NavSvg viewBox="0 0 18 18">{n.d}</NavSvg></NavBtn>
              ))}
              <RefreshBtn>Refresh</RefreshBtn>
            </NavRow>
            <GridFrame>
              <GridMain>
                <Table>
                  <HeaderRow>{HEAD.map((h, i) => <HeaderCell key={i}>{h}</HeaderCell>)}</HeaderRow>
                  <FilterRow>
                    <FilterMark><FilterGlyph /></FilterMark>
                    <FilterHint>Click here to define a filter</FilterHint>
                  </FilterRow>
                  <Rows>{DATA.map(r => <DataRow key={r.id} r={r} />)}</Rows>
                  <FilterBar>
                    <FilterText>&lt;Filter is Empty&gt;</FilterText>
                    <Customize>Customize...</Customize>
                  </FilterBar>
                </Table>
                <VScroll>
                  <ScrollArrow>▲</ScrollArrow>
                  <VSpacer />
                  <VThumb><Grip /></VThumb>
                </VScroll>
              </GridMain>
              <HScroll>
                <HArrow>◀</HArrow>
                <HThumb />
              </HScroll>
            </GridFrame>
          </TabPage>
        </Right>
      </Main>
      <Cloud>
        <CloudLogo>
          <svg width="20" height="20" viewBox="0 0 20 20" fill="none" stroke="#fff" strokeWidth="2.4">
            <circle cx="10" cy="6" r="3.600" /><circle cx="5.500" cy="14" r="3.600" /><circle cx="14.500" cy="14" r="3.600" />
          </svg>
        </CloudLogo>
        <CloudText>极速上传</CloudText>
      </Cloud>
      <Annotation width="3440" height="1329" viewBox="0 0 3440 1329">
        <rect x="49" y="785" width="2056" height="69" fill="none" stroke="#fa3c3c" strokeWidth="3" />
        <rect x="2534" y="786" width="146" height="43" fill="none" stroke="#fa3c3c" strokeWidth="3" />
        <polygon points="2594,878 2628,888 2619,891 3045,1242 2611,900 2611,909" fill="#f23a3a" />
      </Annotation>
      <Watermark>CSDN @山川绿水</Watermark>
    </Page>
  );
}
